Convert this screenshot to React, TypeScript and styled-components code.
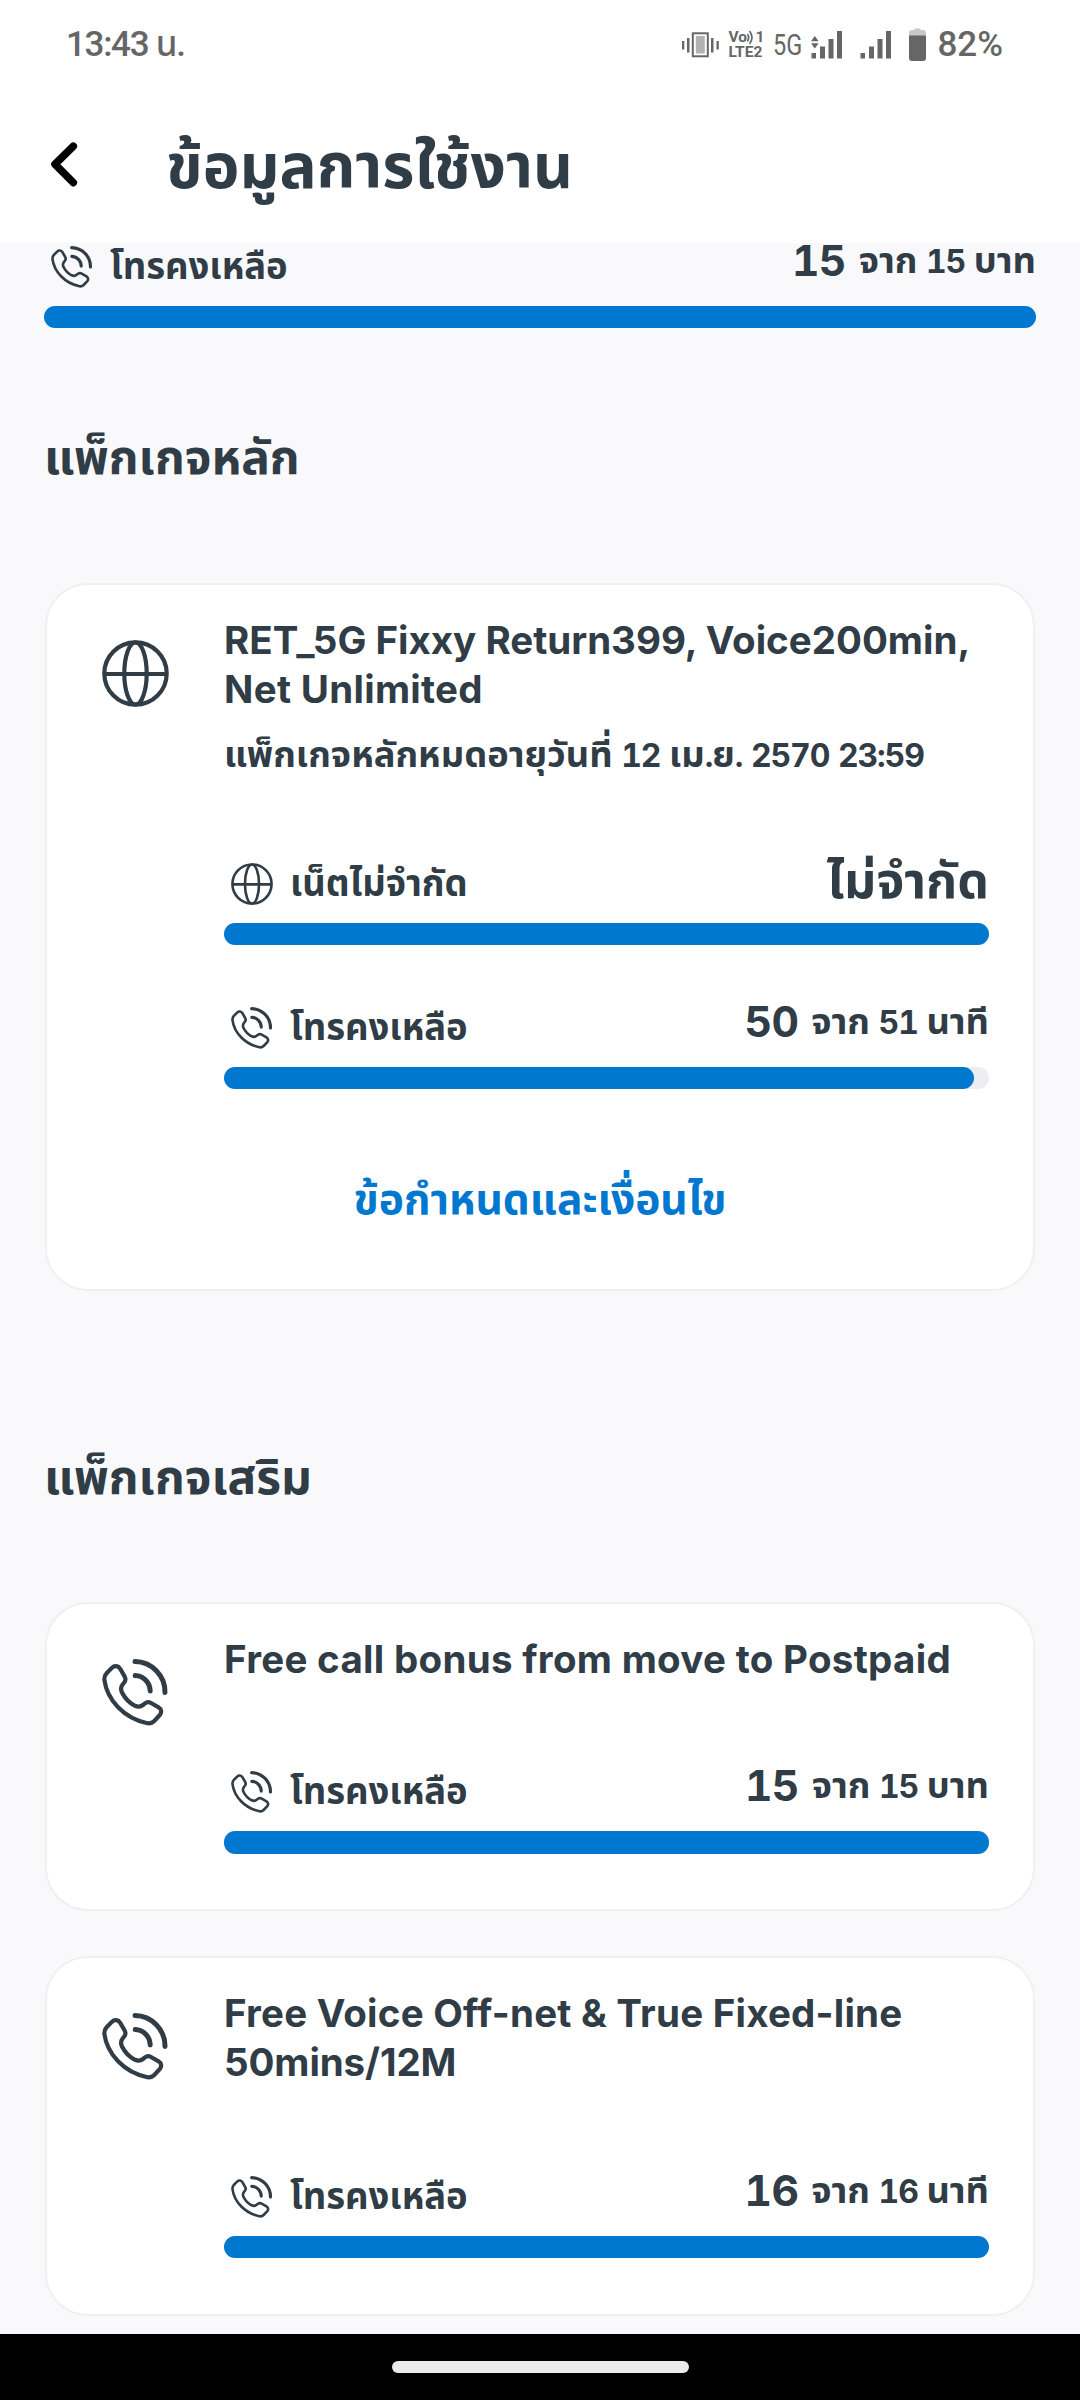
import React from "react";
import styled, { createGlobalStyle } from "styled-components";

const ink = "#303c46";
const blue = "#0078d0";

const Global = createGlobalStyle`
  body { margin: 0; background: #f9f9fb; }
  * { box-sizing: border-box; }
`;

const Screen = styled.div`
  width: 1080px;
  height: 2400px;
  display: flex;
  flex-direction: column;
  overflow: hidden;
  color: ${ink};
  background: #f9f9fb;
  font-family: Inter, "Noto Sans Thai", "Noto Sans", sans-serif;
  font-weight: 700;
`;

/* $drop is the distance from the top of the line box to the baseline. */
const Text = styled.div<{ $size: number; $drop: number; $track?: number }>`
  font-size: ${(p) => p.$size}px;
  line-height: ${(p) => 2 * (p.$drop - 0.3637 * p.$size)}px;
  letter-spacing: ${(p) => p.$track ?? 0}px;
  white-space: nowrap;
`;
const Figures = styled.span`
  font-size: 32px;
  line-height: 0;
  letter-spacing: -1.1px;
  font-variant-numeric: tabular-nums;
`;
const BigNumber = styled(Text)`
  font-variant-numeric: tabular-nums;
`;

const StatusBar = styled.div`
  height: 86px;
  flex: none;
  padding: 3px 77px 0 66px;
  display: flex;
  justify-content: space-between;
  align-items: center;
  background: #fff;
  color: #666;
  font-family: Roboto, "Noto Sans Thai", sans-serif;
  font-weight: 500;
`;
const Clock = styled.div`
  font-size: 35px;
  letter-spacing: -1.3px;
  line-height: 36px;
`;
const StatusIcons = styled.div`
  display: flex;
  align-items: center;
`;
const VoLte = styled.div`
  width: 36px;
  margin: 0 9px;
  font-size: 15.5px;
  font-weight: 700;
  line-height: 15px;
`;
const VoLine = styled.div`
  display: flex;
  justify-content: space-between;
  height: 15px;
`;
const FiveG = styled.div`
  width: 27px;
  margin-right: 11px;
  font-size: 29px;
  font-weight: 400;
  transform: scaleX(0.81);
  transform-origin: 0 50%;
`;
const SignalGap = styled.div`
  width: 17px;
`;
const Battery = styled.svg`
  width: 17px;
  height: 34px;
  margin: 0 11px 0 17px;
`;
const Percent = styled.div`
  font-size: 35px;
  line-height: 36px;
`;

const Header = styled.div`
  height: 157px;
  flex: none;
  padding-left: 48px;
  display: flex;
  align-items: flex-start;
  background: #fff;
`;
const BackIcon = styled.svg`
  width: 32px;
  height: 50px;
  margin: 53px 86px 0 0;
`;

const Content = styled.div`
  flex: 1;
  min-height: 0;
  overflow: hidden;
  padding: 0 44px;
`;
const Section = styled.div<{ $height: number; $top: number }>`
  height: ${(p) => p.$height}px;
  padding-top: ${(p) => p.$top}px;
`;
const CardList = styled.div`
  padding: 0 1px;
  display: flex;
  flex-direction: column;
  gap: 45px;
`;
const Card = styled.div<{ $height: number }>`
  height: ${(p) => p.$height}px;
  border: 2px solid #f0f0f1;
  border-radius: 43px;
  background: #fff;
`;
const CardRow = styled.div`
  padding: 0 44px 0 55px;
  display: flex;
`;
const CardIcon = styled.div`
  width: 122px;
  flex: none;
  padding-top: 55px;
`;
const CardBody = styled.div`
  flex: 1;
  padding-top: 31.5px;
`;

const UsageBlock = styled.div<{ $top: number }>`
  margin-top: ${(p) => p.$top}px;
`;
const UsageHead = styled.div<{ $clipped?: boolean }>`
  height: ${(p) => (p.$clipped ? 62.6 : 64)}px;
  padding-left: 7px;
  display: flex;
  align-items: flex-end;
`;
const UsageRow = styled.div`
  flex: 1;
  height: 64px;
  display: flex;
  align-items: flex-start;
`;
const UsageIcon = styled.div`
  width: 59px;
  padding-top: 4px;
  line-height: 0;
`;
const UsageValue = styled.div`
  margin-left: auto;
  display: flex;
  gap: 13px;
`;
const Track = styled.div`
  height: 22.4px;
  border-radius: 11.2px;
  background: #edeef2;
`;
const Fill = styled.div`
  height: 100%;
  border-radius: 11.2px;
  background: ${blue};
`;
const TermsLink = styled.div`
  margin-top: 79px;
  display: flex;
  justify-content: center;
  color: ${blue};
`;
const NavBar = styled.div`
  height: 66px;
  flex: none;
  display: flex;
  justify-content: center;
  padding-top: 27px;
  background: #000;
`;
const NavPill = styled.div`
  width: 297px;
  height: 12px;
  border-radius: 6px;
  background: #ebebeb;
`;

function Globe({ size }: { size: number }) {
  return (
    <svg width={size} height={size} viewBox="0 0 67 67" fill="none" stroke={ink} strokeWidth="4.2">
      <circle cx="33.5" cy="33.5" r="31.2" />
      <ellipse cx="33.5" cy="33.5" rx="11.2" ry="31.2" />
      <path d="M2.5 34H64.5" />
    </svg>
  );
}

function Phone({ size }: { size: number }) {
  return (
    <svg width={size} height={size} viewBox="0 0 67 67" fill="none" stroke={ink} strokeWidth="4.2" strokeLinecap="round" strokeLinejoin="round">
      <path d="M2.3 20.5C2.3 18 3 16 4.6 14.3L9.8 8.9C12.5 6.3 16.3 6.7 18.2 9.8L22.7 17.6C23.8 19.7 23.6 21.8 22.2 23.5L20.6 25.6C18.8 28 18.7 30.8 20 33.5C23 39.5 27.5 44 33 46.8C36 48 38.8 47.8 41 46L43 44.4C44.8 43 47 42.9 49 44L56.6 48.3C59.6 50.2 60 53.6 57.6 56.3L52 62.2C50.2 64 48 64.6 45.4 64.2C22 59.5 5 41 2.3 20.5Z" />
      <path strokeWidth="5" d="M33 2.6A30.5 30.5 0 0 1 63 33.4M33.2 16.6A15.5 15.5 0 0 1 48.2 32" />
    </svg>
  );
}

/* Thai text with its digits and stops set slightly smaller and in tabular figures. */
function Mixed({ children }: { children: string }) {
  return (
    <>
      {children.split(/([0-9:.]+)/).map((part, i) =>
        i % 2 ? <Figures key={i}>{part}</Figures> : part
      )}
    </>
  );
}

type UsageProps = {
  icon: "globe" | "phone";
  label: string;
  value: string;
  rest?: string;
  percent?: number;
  top?: number;
  clipped?: boolean;
};
function Usage({ icon, label, value, rest, percent = 100, top = 0, clipped }: UsageProps) {
  return (
    <UsageBlock $top={top}>
      <UsageHead $clipped={clipped}>
        <UsageRow>
          <UsageIcon>{icon === "globe" ? <Globe size={42} /> : <Phone size={42} />}</UsageIcon>
          <Text $size={36.4} $drop={37.5}>{label}</Text>
          <UsageValue>
            {rest ? (
              <>
                <BigNumber $size={42.6} $drop={34} $track={-0.7}>{value}</BigNumber>
                <Text $size={36.3} $drop={31.7}><Mixed>{rest}</Mixed></Text>
              </>
            ) : (
              <Text $size={50} $drop={39.5}>{value}</Text>
            )}
          </UsageValue>
        </UsageRow>
      </UsageHead>
      <Track>
        <Fill style={{ width: `${percent}%` }} />
      </Track>
    </UsageBlock>
  );
}

function Bars({ arrows }: { arrows?: boolean }) {
  return (
    <svg width="32" height="34" viewBox="0 0 32 34" fill="#666">
      <path d="M0.500 25h4.500v5.500h-4.500zM9 18.500h5v12h-5zM17.500 11h5v19.500h-5zM26 3h5v27.500h-5z" />
      {arrows && <path d="M3.800 8l3.800 5.200h-7.600zM3.800 20.500l-3.800-5.200h7.600z" />}
    </svg>
  );
}

export default function App() {
  return (
    <Screen>
      <Global />
      <StatusBar>
        <Clock>13:43 น.</Clock>
        <StatusIcons>
          <svg width="37" height="26" viewBox="0 0 37 26" fill="#666">
            <path d="M0 9h2.300v8.500h-2.300zM5 6h2.500v14.500h-2.500zM29 6h2.500v14.500h-2.500zM34.500 9h2.300v8.500h-2.300z" />
            <rect x="10.800" y="1.300" width="15" height="23" fill="#fff" stroke="#666" strokeWidth="2" />
            <rect x="13.800" y="4" width="9" height="17.500" fill="#b2b2b2" />
          </svg>
          <VoLte>
            <VoLine>
              <span>Vo</span>
              <svg width="8" height="15" viewBox="0 0 8 15" fill="none" stroke="#666" strokeWidth="1.700">
                <path d="M0.300 4Q3 7.500 0.300 11.500M2.500 1Q7.500 7.500 2.500 14" />
              </svg>
              <span>1</span>
            </VoLine>
            <VoLine>LTE2</VoLine>
          </VoLte>
          <FiveG>5G</FiveG>
          <Bars arrows />
          <SignalGap />
          <Bars />
          <Battery viewBox="0 0 17 34">
            <path d="M0 8V5q0-3 3-3h2.500v-1.500h6V2h2.500q3 0 3 3v3z" fill="#c8c8c8" />
            <path d="M0 7.500h17V30q0 3-3 3H3q-3 0-3-3z" fill="#666" />
          </Battery>
          <Percent>82%</Percent>
        </StatusIcons>
      </StatusBar>
      <Header>
        <BackIcon viewBox="0 0 32 50" fill="none" stroke="#000" strokeWidth="7.600" strokeLinecap="round" strokeLinejoin="round">
          <path d="M25.300 7.200L7 25.300L25.300 43.600" />
        </BackIcon>
        <Text $size={62} $drop={102.5}>ข้อมูลการใช้งาน</Text>
      </Header>
      <Content>
        <Usage clipped icon="phone" label="โทรคงเหลือ" value="15" rest="จาก 15 บาท" />
        <Section $height={255} $top={99.5}>
          <Text $size={47.8} $drop={48}>แพ็กเกจหลัก</Text>
        </Section>
        <CardList>
          <Card $height={708}>
            <CardRow>
              <CardIcon><Globe size={67} /></CardIcon>
              <CardBody>
                <Text $size={38.5} $drop={38.5}>RET_5G Fixxy Return399, Voice200min,</Text>
                <Text $size={38.5} $drop={38.5} $track={0.3}>Net Unlimited</Text>
                <Text $size={36.3} $drop={53.5}><Mixed>แพ็กเกจหลักหมดอายุวันที่ 12 เม.ย. 2570 23:59</Mixed></Text>
                <Usage top={64} icon="globe" label="เน็ตไม่จำกัด" value="ไม่จำกัด" />
                <Usage top={57.6} icon="phone" label="โทรคงเหลือ" value="50" rest="จาก 51 นาที" percent={98.04} />
              </CardBody>
            </CardRow>
            <TermsLink>
              <Text $size={42.5} $drop={46}>ข้อกำหนดและเงื่อนไข</Text>
            </TermsLink>
          </Card>
        </CardList>
        <Section $height={311} $top={156}>
          <Text $size={47.8} $drop={48}>แพ็กเกจเสริม</Text>
        </Section>
        <CardList>
          <Card $height={309}>
            <CardRow>
              <CardIcon><Phone size={67} /></CardIcon>
              <CardBody>
                <Text $size={38.5} $drop={38.5} $track={0.3}>Free call bonus from move to Postpaid</Text>
                <Usage top={83} icon="phone" label="โทรคงเหลือ" value="15" rest="จาก 15 บาท" />
              </CardBody>
            </CardRow>
          </Card>
          <Card $height={360}>
            <CardRow>
              <CardIcon><Phone size={67} /></CardIcon>
              <CardBody>
                <Text $size={38.5} $drop={38.5} $track={0.22}>Free Voice Off-net & True Fixed-line</Text>
                <Text $size={38.5} $drop={38.8} $track={-0.1}>50mins/12M</Text>
                <Usage top={83.6} icon="phone" label="โทรคงเหลือ" value="16" rest="จาก 16 นาที" />
              </CardBody>
            </CardRow>
          </Card>
        </CardList>
      </Content>
      <NavBar><NavPill /></NavBar>
    </Screen>
  );
}
